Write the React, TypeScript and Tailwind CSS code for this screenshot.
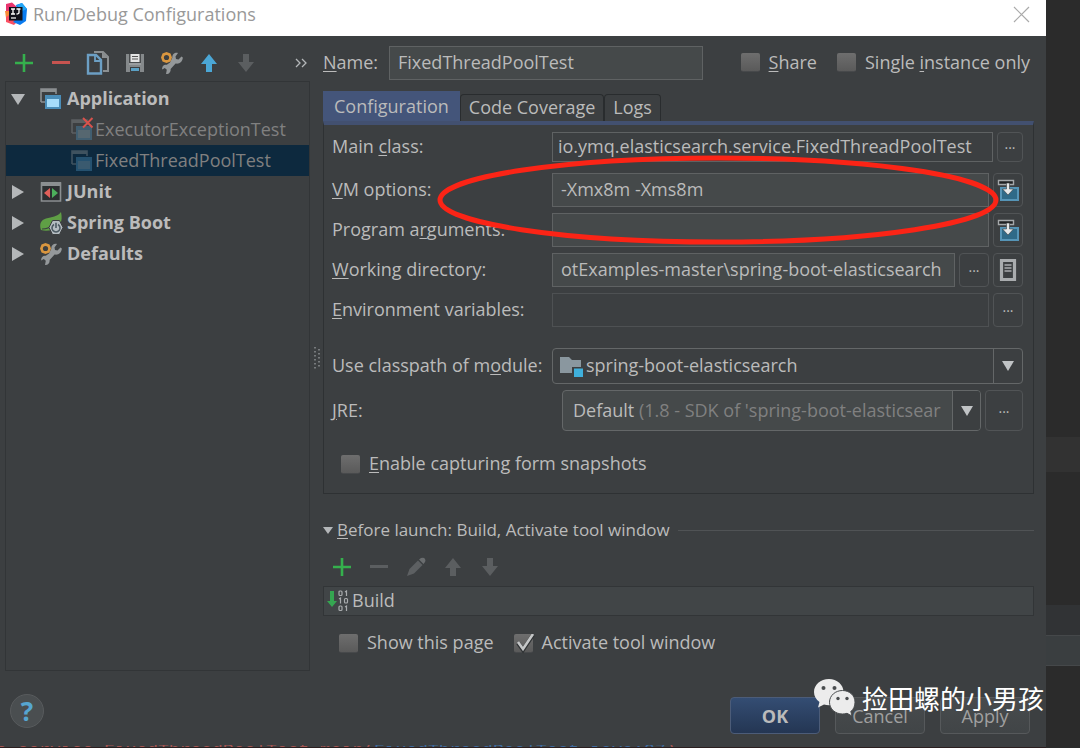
import { useState } from 'react';
import type { ReactNode } from 'react';

// '&' marks the mnemonic letter of a label
function Mnemonic({ text }: { text: string }) {
  const i = text.indexOf('&');
  if (i < 0) return <>{text}</>;
  return (
    <>
      {text.slice(0, i)}
      <span className="underline decoration-1 underline-offset-2">{text[i + 1]}</span>
      {text.slice(i + 2)}
    </>
  );
}

function IdeaLogo() {
  return (
    <svg width="24" height="24" viewBox="0 0 24 24" aria-hidden="true">
      <path d="M2 2l6-1.500 5 4.500-3 6-8-1z" fill="#e8356f" />
      <path d="M1 9h5v5l-4 2z" fill="#f98a3a" />
      <path d="M2 15l5-3 6 8-3 3-8-3z" fill="#fb4f63" />
      <path d="M12 3l6-2 5 6-1 12-6 4-7-3 6-6z" fill="#0a7cf0" />
      <path d="M13 3l5-2 5 6-7 3z" fill="#21a6f5" />
      <rect x="5" y="5" width="13.500" height="13.500" fill="#10101a" />
      <path d="M7 7h4M9 7v5M7 12h4M12.500 7h4M15 7v3.500q0 1.500-2.500 1.500" stroke="#fff" strokeWidth="1.300" fill="none" />
      <path d="M7 16h5" stroke="#fff" strokeWidth="1.200" />
    </svg>
  );
}

function PlusIcon() {
  return (
    <svg width="20" height="20" viewBox="0 0 20 20" aria-hidden="true">
      <path d="M10 1v18M1 10h18" stroke="#35b04d" strokeWidth="2.600" />
    </svg>
  );
}

function MinusIcon({ color }: { color: string }) {
  return (
    <svg width="20" height="20" viewBox="0 0 20 20" aria-hidden="true">
      <path d="M1 9.500h18" stroke={color} strokeWidth="3" />
    </svg>
  );
}

function CopyIcon() {
  return (
    <svg width="24" height="24" viewBox="0 0 24 24" fill="none" aria-hidden="true">
      <path d="M8 1h9l5 5v14h-5" stroke="#8b8f91" strokeWidth="2" />
      <path d="M16 1v6h6z" fill="#8b8f91" />
      <path d="M2 4h8l5 5v13.500H2z" fill="#3c3f41" stroke="#6c9fc4" strokeWidth="2.400" />
      <path d="M9 4v6h6" stroke="#6c9fc4" strokeWidth="1.800" />
    </svg>
  );
}

function SaveIcon() {
  return (
    <svg width="20" height="20" viewBox="0 0 20 20" aria-hidden="true">
      <path d="M1 1h18v18H1z" fill="#85898b" />
      <path d="M4 1h12v9H4z" fill="#4a4d4f" />
      <path d="M5.500 1h9v8h-9z" fill="#e4e4e4" />
      <path d="M7 3.500h6M7 6h6" stroke="#555" strokeWidth="1" />
      <path d="M4 10h12v2H4z" fill="#9a9d9f" />
      <path d="M5 14h10v5H5z" fill="#3c3f41" />
      <path d="M6 15h8v3H6z" fill="#5ba0c4" />
    </svg>
  );
}

function WrenchIcon() {
  return (
    <svg width="24" height="24" viewBox="0 0 24 24" className="shrink-0" aria-hidden="true">
      <path d="M21.500 5.500l-3 3-2.500-.5-.5-2.500 2.500-3.500c-3-.8-6 1.200-5.700 4.800L11 9.500l-1 2-3.200 2.300c-3-.5-5 1.700-4.600 4.700l2.600-1.500 2 1.800L6 23c3 .3 5-2 4.600-5l5-5.500c3.500.8 7-1.500 7.200-6z" fill="#94989a" />
      <path d="M6.500 1l4 1.500 1.500 4-1.500 4-4 1.500-4-1.500L1 6.500l1.500-4z" fill="#d9963f" />
      <circle cx="6.500" cy="6.500" r="2.600" fill="#3c3f41" />
    </svg>
  );
}

function ArrowIcon({ color, down = false }: { color: string; down?: boolean }) {
  return (
    <svg width="18" height="20" viewBox="0 0 18 20" aria-hidden="true">
      <path d={down ? 'M6 1h6v8h5l-8 10-8-10h5z' : 'M6 19h6v-8h5L9 1 1 11h5z'} fill={color} />
    </svg>
  );
}

function PencilIcon() {
  return (
    <svg width="20" height="20" viewBox="0 0 20 20" aria-hidden="true">
      <path d="M1 19l2.500-7 8.500-8.500 4.500 4.500L8 16.500z" fill="#5d6062" />
      <path d="M13 2.500L15 1q3-1 4 1t0 3l-1.500 2z" fill="#6a6d6f" />
    </svg>
  );
}

function AppIcon({ dim = false, broken = false }: { dim?: boolean; broken?: boolean }) {
  return (
    <svg width="22" height="22" viewBox="0 0 22 22" className="shrink-0 overflow-visible" aria-hidden="true">
      <g opacity={dim ? 0.4 : 1}>
        <path d="M1 14V1h15v5M1 14h4" fill="none" stroke="#8b8f91" strokeWidth="1.600" />
        <path d="M1 2.500h15" stroke="#8b8f91" strokeWidth="3" />
        <path d="M5 7h16v14H5z" fill="#4a8db8" />
        <path d="M7 11h12v8H7z" fill={dim ? '#7da3b8' : '#a5dcfa'} />
      </g>
      {broken && <path d="M12-1l9.500 9.500M21.500-1L12 8.500" stroke="#d8524c" strokeWidth="2" />}
    </svg>
  );
}

function JUnitIcon() {
  return (
    <svg width="22" height="22" viewBox="0 0 22 22" className="shrink-0" aria-hidden="true">
      <path d="M1.500 2h19v18h-19z" fill="#2c2f31" stroke="#8b8f91" strokeWidth="1.600" />
      <path d="M1 1h20v4H1z" fill="#8b8f91" />
      <path d="M10 7v10l-6-5z" fill="#e0605a" />
      <path d="M12 7v10l6-5z" fill="#4caf5c" />
    </svg>
  );
}

function SpringIcon() {
  return (
    <svg width="24" height="24" viewBox="0 0 24 24" className="shrink-0" aria-hidden="true">
      <path d="M22 1c1 5 1 9-1 12l-8 6c-4 1-8 1-11 0-2-6 0-10 5-11.500C13 6 18 6 22 1z" fill="#5f9f45" />
      <path d="M3 18c4 0 8-1.500 10-4" stroke="#3c3f41" strokeWidth="1.200" fill="none" />
      <path d="M13.500 9.500h7l3.500 7-3.500 7h-7l-3.500-7z" fill="#b4bcc1" stroke="#3c3f41" />
      <path d="M15 13.500a4 4 0 1 0 4 0M17 11.800V17" stroke="#4d5a63" strokeWidth="1.600" fill="none" />
    </svg>
  );
}

function InsertIcon() {
  return (
    <svg width="22" height="22" viewBox="0 0 22 22" aria-hidden="true">
      <path d="M4 9h17v12H4z" fill="#2f6a88" stroke="#5695b7" strokeWidth="2" />
      <path d="M1.500 1.500h15v4h-15z" fill="#1f2122" stroke="#a5a8aa" strokeWidth="1.400" />
      <path d="M9.500 4h3v6h4L11 16l-5.500-6h4z" fill="#e6e8e9" stroke="#3c3f41" strokeWidth=".6" />
    </svg>
  );
}

function DocIcon() {
  return (
    <svg width="18" height="24" viewBox="0 0 18 24" fill="none" aria-hidden="true">
      <path d="M2.500 2.500h13v19h-13z" stroke="#a9acae" strokeWidth="3.200" />
      <path d="M5.500 7h7M5.500 10h7M5.500 13h7" stroke="#a9acae" strokeWidth="1.300" />
    </svg>
  );
}

function ModuleIcon() {
  return (
    <svg width="23" height="21" viewBox="0 0 23 21" aria-hidden="true">
      <path d="M0 1h9l3 3h9v13H0z" fill="#8a979f" />
      <path d="M12 11h11v10H12z" fill="#3c3f41" />
      <path d="M14 12.500h9V21h-9z" fill="#3fb0dc" />
    </svg>
  );
}

function BuildIcon() {
  return (
    <svg width="22" height="22" viewBox="0 0 22 22" aria-hidden="true">
      <path d="M3 1h4v10h3l-5 6-5-6h3z" fill="#35a651" />
      <g fill="none" stroke="#a9acae" strokeWidth="1.200">
        <rect x="12" y="1" width="3" height="4.500" rx="1" />
        <path d="M18 2l1.500-1v5" />
        <path d="M12 9l1.500-1v5.500" />
        <rect x="17.500" y="8.500" width="3" height="4.500" rx="1" />
        <rect x="12" y="16" width="3" height="4.500" rx="1" />
        <path d="M18 17l1.500-1v5" />
      </g>
    </svg>
  );
}

function Triangle({ open = true }: { open?: boolean }) {
  return (
    <svg width="14" height="14" viewBox="0 0 14 14" className="shrink-0" aria-hidden="true">
      <path d={open ? 'M0 2h14L7 13z' : 'M1 0l12 7-12 7z'} fill="#b4b7b9" />
    </svg>
  );
}

function WeChatIcon() {
  return (
    <svg width="41" height="37" viewBox="0 0 41 37" aria-hidden="true">
      <path d="M15 0C6.500 0 0 5.800 0 13c0 4 2 7.500 5.500 10L4 28.500l6-3c1.600.5 3.300.7 5 .7 8 0 14.500-5.800 14.500-13.200S23 0 15 0z" fill="#ececec" />
      <path d="M28.500 11.500c-7 0-13 5-13 11.700S21.300 35 28.500 35c1.500 0 3-.2 4.500-.7l5 2.700-1.200-4.500c2.700-2.200 4.200-5.300 4.200-9.300 0-6.700-5.500-11.700-12.500-11.700z" fill="#ececec" stroke="#4a4d4f" strokeWidth="1" />
      <circle cx="9.500" cy="9" r="2" fill="#4a4d4f" />
      <circle cx="20.500" cy="9" r="2" fill="#4a4d4f" />
      <circle cx="24" cy="19.500" r="1.700" fill="#4a4d4f" />
      <circle cx="33" cy="19.500" r="1.700" fill="#4a4d4f" />
    </svg>
  );
}

function Check({ label, defaultChecked = false }: { label: string; defaultChecked?: boolean }) {
  return (
    <label className="flex items-center gap-[9px] whitespace-nowrap">
      <span className="relative flex">
        <input type="checkbox" defaultChecked={defaultChecked} className="peer h-[19px] w-[19px] appearance-none rounded-xs border-b border-[#47494b] bg-linear-to-b from-[#6e6e6e] to-[#5a5a5a]" />
        <svg width="22" height="20" viewBox="0 0 22 20" className="pointer-events-none absolute top-0 left-0 hidden peer-checked:block" aria-hidden="true">
          <path d="M4 9l5 7L19 1" fill="none" stroke="#2f3234" strokeWidth="4" />
          <path d="M4 8l5 7L19 0" fill="none" stroke="#c4c6c7" strokeWidth="2.600" />
        </svg>
      </span>
      <span className="pb-0.5"><Mnemonic text={label} /></span>
    </label>
  );
}

function Row({ label, id, children }: { label: string; id: string; children: ReactNode }) {
  return (
    <div className="flex items-center">
      <label htmlFor={id} className="w-[220px] shrink-0 pb-0.5 whitespace-nowrap"><Mnemonic text={label} /></label>
      <div className="flex min-w-0 flex-1 gap-1">{children}</div>
    </div>
  );
}

const field = 'min-w-0 flex-1 border border-[#5f6263] px-2 pb-0.5 text-[#bbbbbb] outline-none';
const sideButton = 'flex w-[30px] shrink-0 items-center justify-center rounded-sm border border-[#515456]';
const dots = 'pb-1.5 text-sm leading-4';
const footerButton = 'h-[37px] w-[90px] rounded-sm border border-[#56595b] bg-linear-to-b from-[#484b4d] to-[#414547] text-[#a0a0a0]';

const toolbar = [
  { title: 'Add', icon: <PlusIcon /> },
  { title: 'Remove', icon: <MinusIcon color="#c75450" /> },
  { title: 'Copy', icon: <CopyIcon /> },
  { title: 'Save', icon: <SaveIcon /> },
  { title: 'Edit defaults', icon: <WrenchIcon /> },
  { title: 'Up', icon: <ArrowIcon color="#4ba7d6" /> },
  { title: 'Down', icon: <ArrowIcon color="#5b5e60" down /> },
];

const launchToolbar = [
  { title: 'Add task', icon: <PlusIcon /> },
  { title: 'Remove task', icon: <MinusIcon color="#5b5e60" /> },
  { title: 'Edit task', icon: <PencilIcon /> },
  { title: 'Move up', icon: <ArrowIcon color="#5b5e60" /> },
  { title: 'Move down', icon: <ArrowIcon color="#5b5e60" down /> },
];

const groups = [
  { name: 'Application', icon: <AppIcon />, open: true, items: ['ExecutorExceptionTest', 'FixedThreadPoolTest'] },
  { name: 'JUnit', icon: <JUnitIcon />, open: false, items: [] },
  { name: 'Spring Boot', icon: <SpringIcon />, open: false, items: [] },
  { name: 'Defaults', icon: <WrenchIcon />, open: false, items: [] },
];

export default function App() {
  const [selected, setSelected] = useState('FixedThreadPoolTest');
  const [tab, setTab] = useState('Configuration');

  return (
    <div className="flex min-h-screen bg-[#2b2b2b] font-['Open_Sans','Noto_Sans_CJK_SC',sans-serif] text-[18px] leading-6 text-[#bbbbbb]">
      <div className="relative flex min-w-0 flex-1 flex-col bg-[#3c3f41]">
        <header className="flex h-9 items-center bg-white pb-2 pl-1 text-[#999999]">
          <IdeaLogo />
          <h1 className="ml-[5px] flex-1">Run/Debug Configurations</h1>
          <button aria-label="Close" className="mr-4">
            <svg width="17" height="17" viewBox="0 0 17 17" aria-hidden="true">
              <path d="M1 1l15 15M16 1L1 16" stroke="#aaaaaa" strokeWidth="1.200" />
            </svg>
          </button>
        </header>

        <main className="flex pt-2 pr-3 pl-[5px]">
          <aside className="flex w-[305px] shrink-0 flex-col">
            <div className="flex h-[37px] items-center">
              {toolbar.map((t) => (
                <button key={t.title} aria-label={t.title} className="flex w-[37px] justify-center">{t.icon}</button>
              ))}
              <button aria-label="More" className="ml-auto pr-[3px]">
                <svg width="12" height="10" viewBox="0 0 12 10" aria-hidden="true">
                  <path d="M1 1l4 4-4 4M7 1l4 4-4 4" fill="none" stroke="#b4b7b9" strokeWidth="1.300" />
                </svg>
              </button>
            </div>
            <ul className="h-[590px] border border-[#323537] pt-px">
              {groups.map((g) => (
                <li key={g.name}>
                  <div className="flex h-[31px] items-center pl-[5px] font-bold">
                    <Triangle open={g.open} />
                    <span className="ml-[14px] flex w-6 justify-center">{g.icon}</span>
                    <span className="ml-1 pb-0.5">{g.name}</span>
                  </div>
                  {g.items.map((item) => (
                    <button
                      key={item}
                      onClick={() => setSelected(item)}
                      className={`flex h-[31px] w-full items-center gap-[2px] pl-[65px] text-[#808080] ${selected === item ? 'bg-[#0d293e]' : ''}`}
                    >
                      <AppIcon dim broken={item === 'ExecutorExceptionTest'} />
                      <span className="pb-0.5">{item}</span>
                    </button>
                  ))}
                </li>
              ))}
            </ul>
          </aside>

          <div className="flex w-[13px] shrink-0 items-center justify-center" aria-hidden="true">
            <svg width="6" height="22" viewBox="0 0 6 22">
              <path d="M1 0v22M5 2v20" stroke="#8b8f91" strokeWidth="1.500" strokeDasharray="1.500 2.500" />
            </svg>
          </div>

          <section className="min-w-0 flex-1">
            <div className="flex h-[37px] items-center">
              <label htmlFor="name" className="w-[66px] pb-0.5"><Mnemonic text="&Name:" /></label>
              <input id="name" defaultValue="FixedThreadPoolTest" className={`${field} h-[34px] max-w-[314px] bg-[#45494a]`} />
              <div className="ml-auto flex gap-5 pr-1">
                <Check label="&Share" />
                <Check label="Single &instance only" />
              </div>
            </div>

            <div className="relative mt-[10px]">
              <div role="tablist" className="flex h-[30px] items-end">
                {['Configuration', 'Code Coverage', 'Logs'].map((t) => (
                  <button
                    key={t}
                    role="tab"
                    aria-selected={tab === t}
                    onClick={() => setTab(t)}
                    className={tab === t ? 'h-[30px] bg-[#44557a] px-[11px]' : 'h-[27px] rounded-t-sm border border-b-0 border-[#292c2e] px-2 pb-0.5'}
                  >
                    {t}
                  </button>
                ))}
              </div>
              <div className="border border-t-4 border-[#2e3133] border-t-[#425070] pt-[7px] pr-[10px] pb-4 pl-2">
                <Row id="main" label="Main &class:">
                  <input id="main" defaultValue="io.ymq.elasticsearch.service.FixedThreadPoolTest" className={`${field} h-[30px] bg-[#3c3f41] pl-[5px] text-[#a9b7c6]`} />
                  <button aria-label="Browse class" className="flex w-[26px] shrink-0 items-center justify-center rounded-sm border border-[#515456]"><span className={dots}>...</span></button>
                </Row>
                <div className="mt-[11px] flex flex-col gap-[6px]">
                  <Row id="vm" label="&VM options:">
                    <input id="vm" defaultValue="-Xmx8m -Xms8m" className={`${field} h-[34px] bg-[#45494a]`} />
                    <button aria-label="Expand VM options" className={sideButton}><InsertIcon /></button>
                  </Row>
                  <Row id="args" label="Program a&rguments:">
                    <input id="args" className={`${field} h-[34px] bg-[#45494a]`} />
                    <button aria-label="Expand arguments" className={sideButton}><InsertIcon /></button>
                  </Row>
                  <Row id="dir" label="&Working directory:">
                    <input id="dir" defaultValue="otExamples-master\spring-boot-elasticsearch" className={`${field} h-[34px] bg-[#45494a]`} />
                    <button aria-label="Browse directory" className={sideButton}><span className={dots}>...</span></button>
                    <button aria-label="Insert macro" className={sideButton}><DocIcon /></button>
                  </Row>
                  <Row id="env" label="&Environment variables:">
                    <input id="env" className="h-[34px] min-w-0 flex-1 border border-[#4e5153] px-2 outline-none" />
                    <button aria-label="Edit variables" className={sideButton}><span className={dots}>...</span></button>
                  </Row>
                </div>
                <div className="mt-[21px] flex flex-col gap-[6px]">
                  <Row id="module" label="Use classpath of m&odule:">
                    <div className="relative flex h-9 min-w-0 flex-1 items-center rounded-sm border border-[#646768]">
                      <span className="pointer-events-none absolute left-[7px]"><ModuleIcon /></span>
                      <select id="module" className="h-full min-w-0 flex-1 appearance-none pb-0.5 pl-[33px] outline-none">
                        <option>spring-boot-elasticsearch</option>
                      </select>
                      <span className="pointer-events-none flex h-full w-[29px] items-center justify-center border-l border-[#646768]">
                        <svg width="12" height="10" viewBox="0 0 12 10" aria-hidden="true"><path d="M0 0h12L6 10z" fill="#c0c3c5" /></svg>
                      </span>
                    </div>
                  </Row>
                  <Row id="jre" label="&JRE:">
                    <div className="relative ml-[10px] flex h-[41px] min-w-0 flex-1 items-center overflow-hidden rounded-sm border border-[#646768] bg-[#45494a]">
                      <span className="min-w-0 flex-1 overflow-hidden pb-0.5 pl-[10px] whitespace-nowrap" aria-hidden="true">
                        Default <span className="text-[#808080]">(1.8 - SDK of 'spring-boot-elasticsear</span>
                      </span>
                      <span className="flex h-full w-7 shrink-0 items-center justify-center border-l border-[#646768] bg-[#3c3f41]">
                        <svg width="12" height="10" viewBox="0 0 12 10" aria-hidden="true"><path d="M0 0h12L6 10z" fill="#c0c3c5" /></svg>
                      </span>
                      <select id="jre" className="absolute inset-0 appearance-none opacity-0">
                        <option>Default</option>
                      </select>
                    </div>
                    <button aria-label="Browse JRE" className="flex w-[38px] shrink-0 items-center justify-center rounded-sm border border-[#515456]"><span className={dots}>...</span></button>
                  </Row>
                </div>
                <div className="mt-5 ml-[9px]">
                  <Check label="&Enable capturing form snapshots" />
                </div>
              </div>
              {/* hand-drawn highlight round the VM options */}
              <svg width="564" height="92" viewBox="0 0 564 92" fill="none" className="pointer-events-none absolute top-[63px] left-[113px]" aria-hidden="true">
                <ellipse cx="282" cy="46" rx="278" ry="42" stroke="#fb2416" strokeWidth="5" />
              </svg>
            </div>

            <div className="mt-6 flex items-center">
              <svg width="10" height="7" viewBox="0 0 10 7" aria-hidden="true"><path d="M0 0h10L5 7z" fill="#b4b7b9" /></svg>
              <h2 className="ml-1 text-[17px] leading-6"><Mnemonic text="&Before launch: Build, Activate tool window" /></h2>
              <div className="ml-2 h-px flex-1 bg-[#505355]" />
            </div>
            <div className="mt-3 flex h-[26px] items-center">
              {launchToolbar.map((t) => (
                <button key={t.title} aria-label={t.title} className="flex w-[37px] justify-center">{t.icon}</button>
              ))}
            </div>
            <div className="mt-[6px] flex h-[30px] items-center gap-[3px] border border-[#323537] bg-[#414547] pl-[3px]">
              <BuildIcon />
              <span className="pb-0.5">Build</span>
            </div>
            <div className="mt-[14px] flex gap-5 pl-4">
              <Check label="Show this page" />
              <Check label="Activate tool window" defaultChecked />
            </div>
          </section>
        </main>

        <footer className="mt-[23px] flex items-end gap-[15px] pr-4 pb-[11px] pl-[10px]">
          <button aria-label="Help" className="mr-auto mb-[6px] h-[34px] w-[34px] rounded-full border border-[#585b5d] bg-[#4a4e50] text-[26px] leading-8 font-bold text-[#56a5d0]">?</button>
          <button className="h-[37px] w-[90px] rounded-sm border border-[#4c5c78] bg-linear-to-b from-[#344d73] to-[#243653] font-bold">OK</button>
          <button className={footerButton}>Cancel</button>
          <button className={footerButton}>Apply</button>
        </footer>

        {/* console line that runs under the bottom edge */}
        <div className="mt-auto h-[3px] overflow-hidden border-b border-[#2b1f20] font-['Liberation_Mono',monospace] text-[18px] leading-3 whitespace-nowrap text-[#a35552]">
          <p className="-ml-1">
            e.service.FixedThreadPoolTest.main(<span className="text-[#3f6a9c]">FixedThreadPoolTest.java:27</span>)
          </p>
        </div>

        <div className="pointer-events-none absolute right-[2px] bottom-8 flex items-center gap-[7px] text-[26px] leading-9 whitespace-nowrap text-white">
          <WeChatIcon />
          <span className="font-['Noto_Sans_CJK_SC',sans-serif]">捡田螺的小男孩</span>
        </div>
      </div>

      <div className="flex w-[34px] shrink-0 flex-col pt-[437px]" aria-hidden="true">
        <div className="h-[35px] bg-[#323232]" />
        <div className="mt-[133px] h-[30px] bg-[#313335]" />
        <div className="h-[31px] border-y border-[#45484a] bg-[#3a3e40]" />
      </div>
    </div>
  );
}
